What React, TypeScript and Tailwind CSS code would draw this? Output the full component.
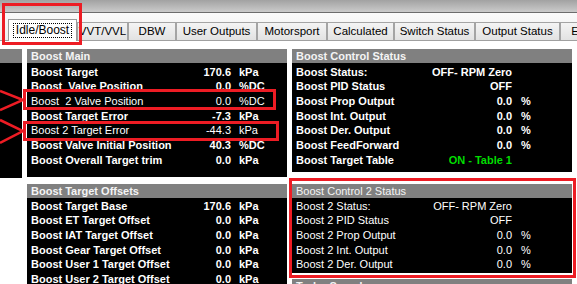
import React from "react";

type Row = { label: string; value: string; unit?: string; bold?: boolean; color?: string };

const tabs = [
  { label: "Idle/Boost", w: "w-[69px]", active: true },
  { label: "VVT/VVL", w: "w-[51px]" },
  { label: "DBW", w: "w-[48px]" },
  { label: "User Outputs", w: "w-[81px]" },
  { label: "Motorsport", w: "w-[70px]" },
  { label: "Calculated", w: "w-[67px]" },
  { label: "Switch Status", w: "w-[81px]" },
  { label: "Output Status", w: "w-[85px]" },
  { label: "ECU Setup", w: "w-[80px]" },
];

const boostMain: Row[] = [
  { label: "Boost Target", value: "170.6", unit: "kPa", bold: true },
  { label: "Boost  Valve Position", value: "0.0", unit: "%DC", bold: true },
  { label: "Boost  2 Valve Position", value: "0.0", unit: "%DC" },
  { label: "Boost Target Error", value: "-7.3", unit: "kPa", bold: true },
  { label: "Boost 2 Target Error", value: "-44.3", unit: "kPa" },
  { label: "Boost Valve Initial Position", value: "40.3", unit: "%DC", bold: true },
  { label: "Boost Overall Target trim", value: "0.0", unit: "kPa", bold: true },
];

const offsets: Row[] = [
  { label: "Boost Target Base", value: "170.6", unit: "kPa", bold: true },
  { label: "Boost ET Target Offset", value: "0.0", unit: "kPa", bold: true },
  { label: "Boost IAT Target Offset", value: "0.0", unit: "kPa", bold: true },
  { label: "Boost Gear Target Offset", value: "0.0", unit: "kPa", bold: true },
  { label: "Boost User 1 Target Offset", value: "0.0", unit: "kPa", bold: true },
  { label: "Boost User 2 Target Offset", value: "0.0", unit: "kPa", bold: true },
];

const control: Row[] = [
  { label: "Boost Status:", value: "OFF- RPM Zero", bold: true },
  { label: "Boost PID Status", value: "OFF", bold: true },
  { label: "Boost Prop Output", value: "0.0", unit: "%", bold: true },
  { label: "Boost Int. Output", value: "0.0", unit: "%", bold: true },
  { label: "Boost Der. Output", value: "0.0", unit: "%", bold: true },
  { label: "Boost FeedForward", value: "0.0", unit: "%", bold: true },
  { label: "Boost Target Table", value: "ON - Table 1", bold: true, color: "text-[#00dc00]" },
];

const control2: Row[] = [
  { label: "Boost 2 Status:", value: "OFF- RPM Zero" },
  { label: "Boost 2 PID Status", value: "OFF" },
  { label: "Boost 2 Prop Output", value: "0.0", unit: "%" },
  { label: "Boost 2 Int. Output", value: "0.0", unit: "%" },
  { label: "Boost 2 Der. Output", value: "0.0", unit: "%" },
];

function Header({ title, bold = true }: { title: string; bold?: boolean }) {
  return (
    <div
      className={`h-[14px] bg-[#808080] pl-[4px] text-[11px] leading-[14px] text-[#f4f4f4] whitespace-pre ${
        bold ? "font-bold" : "font-normal"
      }`}
    >
      {title}
    </div>
  );
}

function Rows({ rows, wide }: { rows: Row[]; wide?: boolean }) {
  return (
    <>
      {rows.map((r) => (
        <div
          key={r.label}
          className={`flex h-[14.67px] pl-[4px] text-[11px] leading-[14.67px] whitespace-pre ${
            r.bold ? "font-bold" : "font-normal"
          }`}
        >
          <span className={wide ? "w-[136px]" : "w-[150px]"}>{r.label}</span>
          <span className={`${wide ? "w-[80px]" : "w-[50px]"} text-right ${r.color ?? ""}`}>{r.value}</span>
          {r.unit && <span className={wide ? "pl-[9px]" : "pl-[8px]"}>{r.unit}</span>}
        </div>
      ))}
    </>
  );
}

export default function App() {
  return (
    <div className="relative h-[284px] w-[577px] overflow-hidden bg-white font-['Liberation_Sans',Arial,sans-serif] text-white">
      {/* window chrome */}
      <div className="h-[12px] bg-gradient-to-b from-[#a2a2a2] to-[#cbcbcb]" />
      <div className="h-px bg-[#6c6c6c]" />
      <div className="flex h-[28px] items-end border-b border-[#a0a0a0] bg-gradient-to-b from-[#fafafa] to-[#eeeeee] pl-[8px]">
        {tabs.map((t) =>
          t.active ? (
            <div
              key={t.label}
              className={`${t.w} relative z-10 -mb-px flex h-[22px] shrink-0 items-center justify-center border border-b-0 border-[#9a9a9a] bg-white`}
            >
              <span className="border border-dotted border-black px-[2px] text-[12px] leading-[13px] text-black">
                {t.label}
              </span>
            </div>
          ) : (
            <div
              key={t.label}
              className={`${t.w} flex h-[18px] shrink-0 items-center justify-center border border-b-0 border-[#a4a4a4] bg-gradient-to-b from-[#f4f4f4] to-[#e2e2e2] text-[11.5px] text-black whitespace-nowrap`}
            >
              {t.label}
            </div>
          )
        )}
      </div>

      {/* panels */}
      <div className="flex gap-[5px] pt-[8px]">
        <div className="w-[22px] shrink-0">
          <Header title="" />
          <div className="h-[115px] bg-black" />
        </div>

        <div className="w-[260px] shrink-0">
          <Header title="Boost Main" />
          <div className="h-[114px] bg-black pt-[1.67px]">
            <Rows rows={boostMain} />
          </div>
          <div className="mt-[7px]">
            <Header title="Boost Target Offsets" />
            <div className="h-[100px] bg-black pt-[0.67px]">
              <Rows rows={offsets} />
            </div>
          </div>
        </div>

        <div className="w-[280px] shrink-0">
          <Header title="Boost Control Status" />
          <div className="h-[109px] bg-black pt-[1.67px]">
            <Rows rows={control} wide />
          </div>
          <div className="mt-[12px]">
            <Header title="Boost Control 2 Status" bold={false} />
            <div className="h-[75px] bg-black pt-[0.67px]">
              <Rows rows={control2} wide />
            </div>
          </div>
          <div className="mt-[6px]">
            <Header title="Turbo Speed" />
          </div>
        </div>
      </div>

      {/* red annotations */}
      <div className="absolute left-[2px] top-[3px] h-[42px] w-[80px] border-[3px] border-[#ed1c24]" />
      <div className="absolute left-[23px] top-[89px] h-[21px] w-[253px] border-[3px] border-[#ed1c24]" />
      <div className="absolute left-[23px] top-[121px] h-[20px] w-[256px] border-[3px] border-[#ed1c24]" />
      <div className="absolute left-[289px] top-[178px] h-[100px] w-[287px] border-[3px] border-[#ed1c24]" />
      <svg className="absolute left-0 top-[85px]" width="26" height="65" viewBox="0 0 26 65">
        <polyline points="0,6 23,15 0,25" fill="none" stroke="#ed1c24" strokeWidth="2.5" />
        <polyline points="0,35 23,46 0,58" fill="none" stroke="#ed1c24" strokeWidth="2.5" />
      </svg>
    </div>
  );
}
